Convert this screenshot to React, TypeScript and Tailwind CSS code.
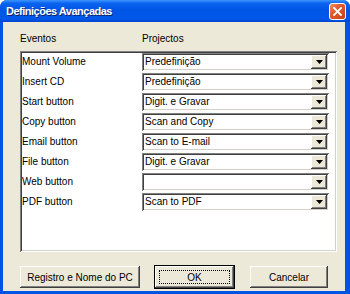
import { ChevronDown } from "lucide-react"

const rows = [
  { label: "Mount Volume", value: "Predefinição" },
  { label: "Insert CD", value: "Predefinição" },
  { label: "Start button", value: "Digit. e Gravar" },
  { label: "Copy button", value: "Scan and Copy" },
  { label: "Email button", value: "Scan to E-mail" },
  { label: "File button", value: "Digit. e Gravar" },
  { label: "Web button", value: "" },
  { label: "PDF button", value: "Scan to PDF" },
]

const raised =
  "shadow-[inset_-1px_-1px_#404040,inset_1px_1px_#ffffff,inset_-2px_-2px_#808080,inset_2px_2px_#ece9d8]"
const sunken =
  "shadow-[inset_1px_1px_#808080,inset_-1px_-1px_#ffffff,inset_2px_2px_#404040,inset_-2px_-2px_#d4d0c8]"

function Combo({ value }: { value: string }) {
  return (
    <div className={`flex h-[18px] w-[187px] items-center bg-white p-[2px] ${sunken}`}>
      <span className="flex-1 truncate pl-[1px] leading-none">{value}</span>
      <span className={`flex h-[14px] w-[16px] items-center justify-center bg-[#ece9d8] ${raised}`}>
        <svg width="7" height="4" viewBox="0 0 7 4">
          <path d="M0 0h7L3.5 4z" fill="#000" />
        </svg>
      </span>
    </div>
  )
}

function Button({ label, w, isDefault }: { label: string; w: string; isDefault?: boolean }) {
  return (
    <button
      className={`flex h-[22px] items-center justify-center bg-[#ece9d8] ${w} ${
        isDefault ? "outline outline-1 outline-black" : ""
      } ${raised}`}
    >
      {isDefault ? (
        <span className="flex h-[14px] w-[71px] items-center justify-center border border-dotted border-black">
          {label}
        </span>
      ) : (
        label
      )}
    </button>
  )
}

export default function App() {
  return (
    <div className="flex h-[294px] w-[350px] flex-col overflow-hidden rounded-t-[7px] bg-[#0054e3] font-['Liberation_Sans',Arial,sans-serif] text-[10px] text-black">
      <div className="flex h-[22px] shrink-0 items-center justify-between bg-[linear-gradient(180deg,#3d95ff_0%,#0a64f0_15%,#0055e5_45%,#0058ea_85%,#0044cc_100%)] pl-[6px] pr-[4px]">
        <span className="text-[11px] font-bold tracking-[-0.5px] text-white [text-shadow:1px_1px_#0a1f6e]">
          Definições Avançadas
        </span>
        <span className="flex h-[17px] w-[17px] items-center justify-center rounded-[3px] border border-white bg-[linear-gradient(135deg,#f0906c_0%,#e25a2c_40%,#c8401a_100%)]">
          <svg width="9" height="9" viewBox="0 0 9 9">
            <path d="M1 1l7 7M8 1L1 8" stroke="#fff" strokeWidth="1.8" strokeLinecap="square" />
          </svg>
        </span>
      </div>

      <div className="mb-[3px] ml-[3px] mr-[5px] flex flex-1 flex-col bg-[#ece9d8] px-[17px] pt-[11px]">
        <div className="flex h-[12px] items-center leading-none">
          <span className="w-[122px]">Eventos</span>
          <span>Projectos</span>
        </div>

        <div className={`mt-[6px] flex h-[201px] w-[317px] flex-col bg-white pl-[2px] pt-[1px] ${sunken}`}>
          {rows.map((r) => (
            <div key={r.label} className="flex h-[20px] items-center">
              <span className="w-[120px] leading-none">{r.label}</span>
              <Combo value={r.value} />
            </div>
          ))}
        </div>

        <div className="mt-[14px] flex items-center">
          <Button label="Registro e Nome do PC" w="w-[121px]" />
          <div className="ml-[15px]">
            <Button label="OK" w="w-[79px]" isDefault />
          </div>
          <div className="ml-[16px]">
            <Button label="Cancelar" w="w-[78px]" />
          </div>
        </div>
      </div>
    </div>
  )
}
